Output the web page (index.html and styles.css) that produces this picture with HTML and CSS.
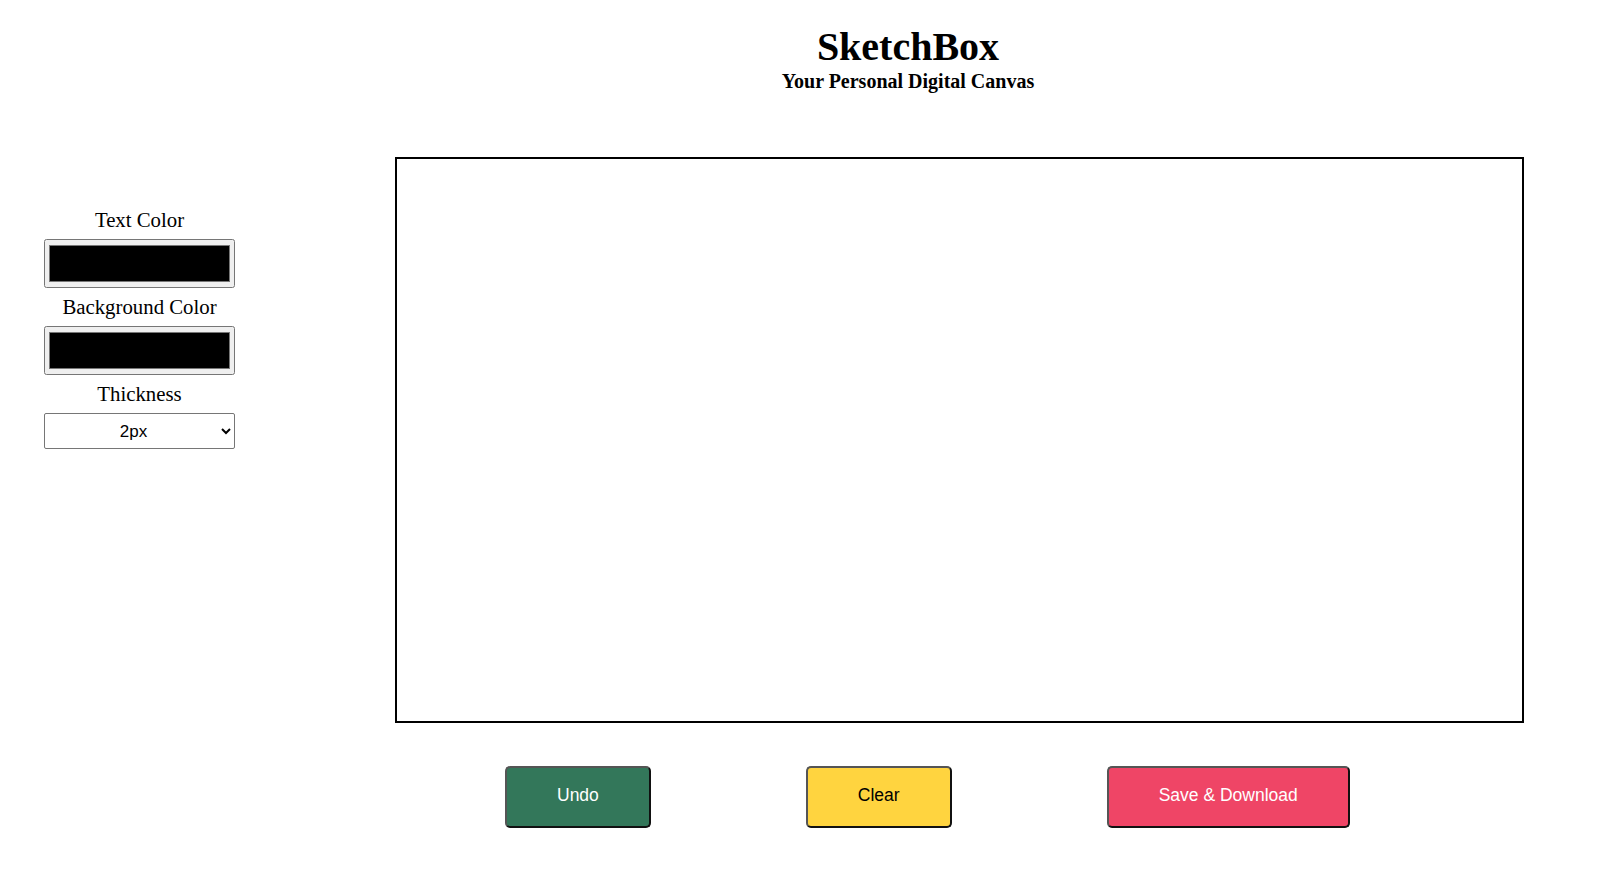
FILE: index.html
```html
<!DOCTYPE html>
<html lang="en">
<head>
<meta charset="utf-8">
<title>SketchBox</title>
<link rel="stylesheet" href="styles.css">
</head>
<body>
  <header class="header">
    <h1 class="title">SketchBox</h1>
    <p class="subtitle">Your Personal Digital Canvas</p>
  </header>
  <div class="workspace">
    <aside class="sidebar">
      <label class="field-label" for="textColor">Text Color</label>
      <input class="color-input" type="color" id="textColor" value="#000000">
      <label class="field-label" for="bgColor">Background Color</label>
      <input class="color-input" type="color" id="bgColor" value="#000000">
      <label class="field-label" for="thickness">Thickness</label>
      <select class="thickness" id="thickness">
        <option>2px</option>
        <option>4px</option>
        <option>6px</option>
        <option>8px</option>
      </select>
    </aside>
    <canvas class="board" width="1125" height="562"></canvas>
  </div>
  <div class="actions">
    <button class="btn btn-undo">Undo</button>
    <button class="btn btn-clear">Clear</button>
    <button class="btn btn-save">Save &amp; Download</button>
  </div>
</body>
</html>
```

FILE: styles.css
```css
html, body {
  margin: 0;
  padding: 0;
  background: #ffffff;
}

body {
  font-family: "Liberation Serif", "Times New Roman", serif;
  color: #000;
}

.header {
  padding: 24px 0 0 200px;
  text-align: center;
}

.title {
  margin: 0;
  font-size: 40px;
  line-height: 46px;
  font-weight: bold;
}

.subtitle {
  margin: 0;
  font-size: 20px;
  line-height: 23px;
  font-weight: bold;
}

.workspace {
  display: flex;
  align-items: flex-start;
  gap: 160px;
  padding-left: 44px;
  margin-top: 64px;
}

.sidebar {
  width: 191px;
  margin-top: 51px;
  display: flex;
  flex-direction: column;
  align-items: center;
  gap: 7px;
}

.field-label {
  font-size: 20.8px;
  line-height: 24px;
}

.color-input {
  width: 191px;
  height: 49px;
  margin: 0;
  box-sizing: border-box;
}

.thickness {
  width: 191px;
  height: 36px;
  margin: 0;
  padding: 0 4px;
  box-sizing: border-box;
  font-family: "Liberation Sans", Arial, sans-serif;
  font-size: 17px;
  text-align: center;
  background: #fff;
  color: #000;
  border: 1px solid #767676;
  border-radius: 2px;
}

.board {
  display: block;
  width: 1125px;
  height: 562px;
  border: 2px solid #000;
  background: #fff;
}

.actions {
  display: flex;
  gap: 155px;
  padding-left: 505px;
  margin-top: 43px;
}

.btn {
  font-family: "Liberation Sans", Arial, sans-serif;
  font-size: 17.5px;
  line-height: 22px;
  padding: 16px 50px 20px;
  border-radius: 5px;
  border-style: solid;
  border-width: 2px;
  border-color: #555 #111 #111 #555;
  cursor: pointer;
}

.btn-undo {
  background: #33775a;
  color: #fff;
}

.btn-clear {
  background: #ffd43f;
  color: #000;
}

.btn-save {
  background: #ef4566;
  color: #fff;
}
```
